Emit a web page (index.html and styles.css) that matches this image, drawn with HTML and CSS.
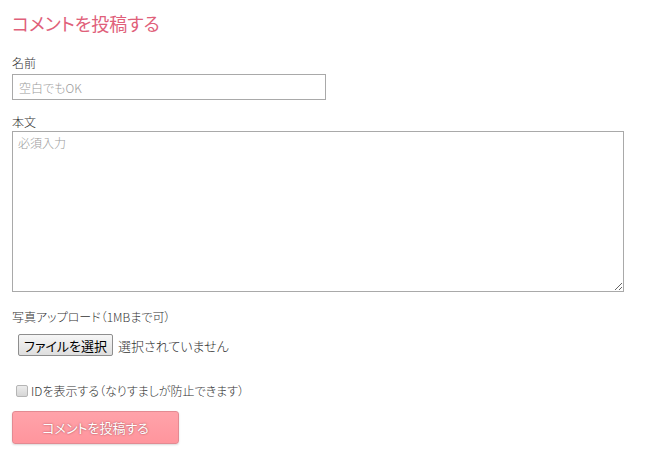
FILE: index.html
```html
<!DOCTYPE html>
<html>
  <head>
    <meta charset="UTF-8" />
    <title>コメントを投稿する</title>
    <link rel="stylesheet" href="styles.css">
  </head>
  <body>
    <h2 class="title">コメントを投稿する</h2>
    <form class="comment-form">
      <label class="label" for="name">名前</label>
      <input type="text" id="name" class="name" placeholder="空白でもOK" />

      <label class="label label-body" for="body">本文</label>
      <textarea id="body" class="body" placeholder="必須入力"></textarea>

      <span class="label label-photo">写真アップロード（1MBまで可）</span>
      <div class="file-row">
        <span class="file-btn">ファイルを選択</span>
        <span class="file-status">選択されていません</span>
      </div>

      <div class="checkbox">
        <input type="checkbox" id="show-id" />
        <label for="show-id">IDを表示する（なりすましが防止できます）</label>
      </div>

      <button type="button" class="submit">コメントを投稿する</button>
    </form>
  </body>
</html>
```

FILE: styles.css
```css
:root {
  --accent: #e0607a;
  --border: #a9a9a9;
  --muted: #9a9a9a;
}

body {
  margin: 0;
  padding: 10px 12px;
  font-family: "Noto Sans CJK JP", "Noto Sans", sans-serif;
  font-size: 12px;
  font-weight: 300;
  font-feature-settings: "palt";
  color: #333;
  background: #fff;
}

.title {
  margin: 0;
  font-size: 18px;
  line-height: 26px;
  font-weight: 400;
  color: var(--accent);
}

.comment-form {
  display: flex;
  flex-direction: column;
  align-items: flex-start;
}

.label {
  display: block;
  line-height: 16px;
  margin: 19px 0 3px;
}

.label-body {
  margin: 14px 0 1px;
}

.label-photo {
  margin: 17px 0 9px;
}

input.name,
textarea.body {
  box-sizing: border-box;
  border: 1px solid var(--border);
  border-radius: 0;
  font-family: inherit;
  font-size: 12px;
  font-weight: 300;
  font-feature-settings: "palt";
  color: #333;
  margin: 0;
  outline: none;
}

input.name {
  width: 314px;
  height: 26px;
  padding: 0 6px;
}

textarea.body {
  width: 612px;
  height: 161px;
  padding: 3px 5px;
  line-height: 16px;
}

input.name::placeholder,
textarea.body::placeholder {
  color: var(--muted);
}

.file-row {
  display: flex;
  align-items: center;
  gap: 5px;
  margin-left: 6px;
  height: 22px;
}

.file-btn {
  box-sizing: border-box;
  width: 95px;
  height: 22px;
  display: flex;
  align-items: center;
  justify-content: center;
  font-size: 13px;
  font-weight: 400;
  color: #000;
  border: 1px solid #8e8e8e;
  border-radius: 2px;
  background: linear-gradient(#f6f6f6, #dedede);
}

.file-status {
  font-size: 13px;
  color: #333;
}

.checkbox {
  display: flex;
  align-items: center;
  gap: 3px;
  margin: 27px 0 12px 4px;
  height: 16px;
}

.checkbox label {
  font-size: 12px;
  line-height: 16px;
  cursor: pointer;
}

input[type="checkbox"] {
  appearance: none;
  width: 12px;
  height: 12px;
  margin: 0;
  border: 1px solid #b5b5b5;
  border-radius: 2px;
  background: linear-gradient(#ececec, #d6d6d6);
}

input[type="checkbox"]:checked {
  background: var(--accent);
}

.submit {
  box-sizing: border-box;
  width: 167px;
  height: 33px;
  border: 1px solid #e38a92;
  border-radius: 3px;
  background: linear-gradient(#ffa3aa, #ff959d);
  color: #fff;
  font-family: inherit;
  font-size: 13px;
  font-weight: 400;
  font-feature-settings: "palt";
  text-shadow: 0 0 2px rgba(110, 30, 40, 0.7);
  box-shadow: 0 1px 2px rgba(0, 0, 0, 0.15);
  cursor: pointer;
}
```
